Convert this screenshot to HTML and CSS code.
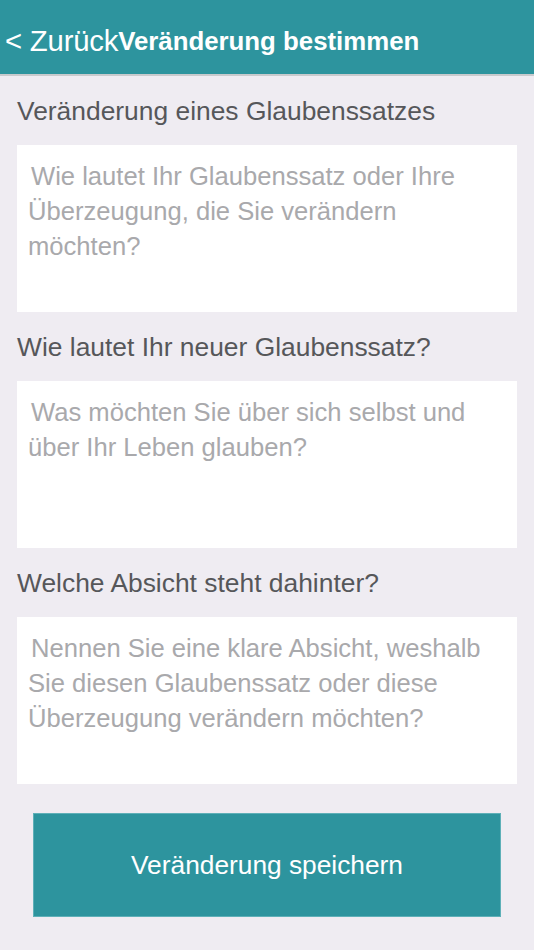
FILE: index.html
```html
<!DOCTYPE html>
<html lang="de">
<head>
<meta charset="utf-8">
<title>Veränderung bestimmen</title>
<link rel="stylesheet" href="styles.css">
</head>
<body>
<header class="navbar">
  <span class="back">&lt; Zurück</span><span class="title">Veränderung bestimmen</span>
</header>
<main class="content">
  <section class="section">
    <label class="label">Veränderung eines Glaubenssatzes</label>
    <div class="field"><span class="ph">Wie lautet Ihr Glaubenssatz oder Ihre<br>Überzeugung, die Sie verändern<br>möchten?</span></div>
  </section>
  <section class="section">
    <label class="label">Wie lautet Ihr neuer Glaubenssatz?</label>
    <div class="field"><span class="ph">Was möchten Sie über sich selbst und<br>über Ihr Leben glauben?</span></div>
  </section>
  <section class="section">
    <label class="label">Welche Absicht steht dahinter?</label>
    <div class="field"><span class="ph">Nennen Sie eine klare Absicht, weshalb<br>Sie diesen Glaubenssatz oder diese<br>Überzeugung verändern möchten?</span></div>
  </section>
  <div class="actions">
    <button class="save">Veränderung speichern</button>
  </div>
</main>
</body>
</html>
```
FILE: styles.css
```css
html, body {
  margin: 0;
  padding: 0;
}
body {
  width: 534px;
  height: 950px;
  background: #efecf2;
  font-family: "Liberation Sans", Arial, sans-serif;
  overflow: hidden;
}
.navbar {
  background: #2d949e;
  border-bottom: 2px solid #c8cacd;
  display: flex;
  align-items: center;
  padding: 8px 0 0 5px;
  box-sizing: content-box;
  height: 66px;
  color: #ffffff;
  white-space: nowrap;
}
.back {
  font-size: 29.3px;
  font-weight: 400;
  letter-spacing: -0.2px;
}
.title {
  font-size: 25.8px;
  font-weight: 700;
}
.content {
  display: flex;
  flex-direction: column;
  padding: 0 17px;
}
.section {
  display: flex;
  flex-direction: column;
  padding-top: 20px;
}
.label {
  display: block;
  height: 30px;
  line-height: 30px;
  font-size: 26.4px;
  color: #56575a;
  margin-bottom: 19px;
}
.field {
  background: #ffffff;
  height: 167px;
  box-sizing: border-box;
  padding: 14px 11px 0 11px;
}
.ph {
  display: block;
  font-size: 25.6px;
  line-height: 35px;
  color: #a9a9ac;
  text-indent: 3px;
  white-space: nowrap;
}
.actions {
  display: flex;
  justify-content: center;
  padding-top: 29px;
}
.save {
  width: 468px;
  height: 104px;
  background: #2d949e;
  border: 1px solid #5eb0b8;
  color: #ffffff;
  font-family: "Liberation Sans", Arial, sans-serif;
  font-size: 26.3px;
  padding: 0;
  cursor: pointer;
}
```
